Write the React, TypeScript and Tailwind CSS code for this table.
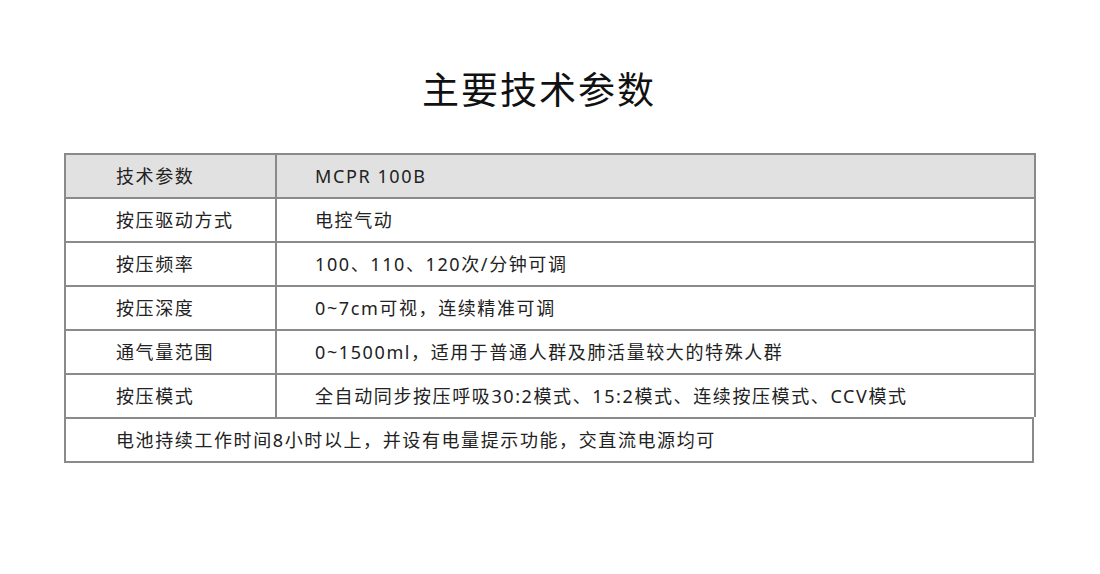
import React from 'react';

const rows: [string, string][] = [
  ['按压驱动方式', '电控气动'],
  ['按压频率', '100、110、120次/分钟可调'],
  ['按压深度', '0~7cm可视，连续精准可调'],
  ['通气量范围', '0~1500ml，适用于普通人群及肺活量较大的特殊人群'],
  ['按压模式', '全自动同步按压呼吸30:2模式、15:2模式、连续按压模式、CCV模式'],
];

export default function App() {
  return (
    <div
      className="w-[1100px] h-[574px] bg-white text-[#222] flex flex-col"
      style={{ fontFamily: '"Noto Sans", "Noto Sans CJK SC", sans-serif' }}
    >
      <h1 className="mt-[63px] h-[52px] pr-[22px] flex items-center justify-center text-[37px] font-normal tracking-[2px] text-[#111] leading-none">
        主要技术参数
      </h1>

      <div className="mt-[38px] ml-[64px] w-[972px] flex flex-col text-[18px] tracking-[1.6px]">
        <div className="h-[44px] flex border-x-2 border-t-2 border-[#8a8a8a] bg-[#e1e1e1]">
          <div className="w-[211px] pl-[50px] flex items-center border-r-2 border-[#8a8a8a]">技术参数</div>
          <div className="flex-1 pl-[38px] flex items-center">MCPR 100B</div>
        </div>
        {rows.map(([label, value]) => (
          <div key={label} className="h-[44px] flex border-x-2 border-t-2 border-[#8a8a8a]">
            <div className="w-[211px] pl-[50px] flex items-center border-r-2 border-[#8a8a8a]">{label}</div>
            <div className="flex-1 pl-[38px] flex items-center">{value}</div>
          </div>
        ))}
        <div className="w-[970px] h-[46px] pl-[50px] flex items-center border-2 border-[#8a8a8a]">
          电池持续工作时间8小时以上，并设有电量提示功能，交直流电源均可
        </div>
      </div>
    </div>
  );
}
